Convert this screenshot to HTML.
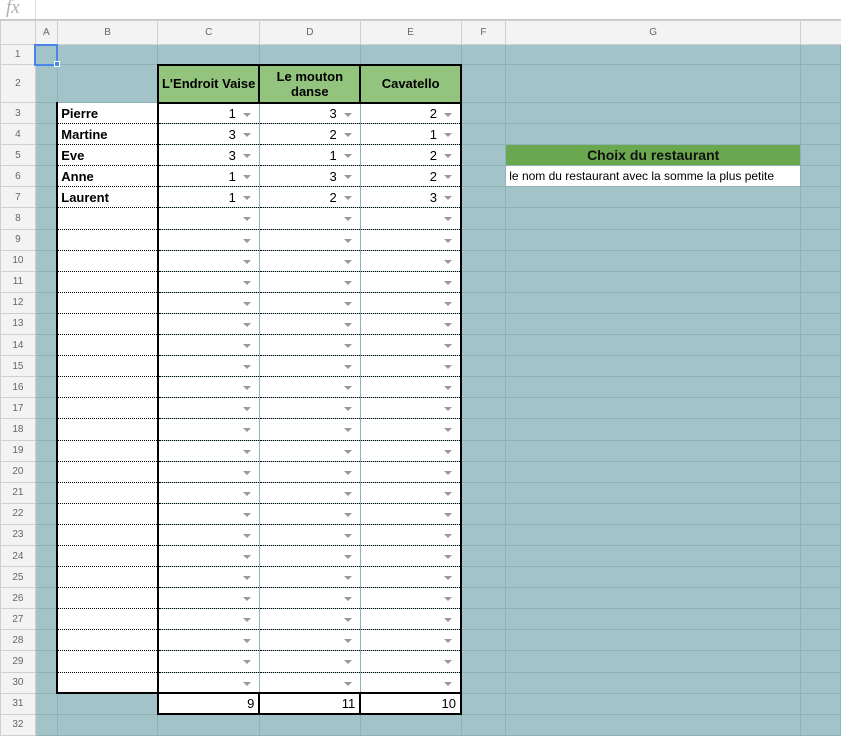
<!DOCTYPE html>
<html><head><meta charset="utf-8"><style>
*{margin:0;padding:0;box-sizing:border-box}
body{width:841px;height:734px;overflow:hidden;background:#a2c4c9;font-family:"Liberation Sans",Arial,sans-serif;position:relative}
#fb{position:absolute;left:0;top:0;width:841px;height:20px;background:#fff;border-bottom:1px solid #c8c8c8}
#fb span{position:absolute;left:6px;top:-3px;font-family:"Liberation Serif",serif;font-style:italic;font-size:19px;color:#b0b0b0}
#fb i{position:absolute;left:35px;top:0;height:19px;border-left:1px solid #ddd}
table{position:absolute;left:0;top:20px;border-collapse:collapse;table-layout:fixed}
th{background:#f3f3f3;color:#666;font-weight:normal;font-size:10px;border:1px solid #cfcfcf}
thead th{height:24px}
tbody th{text-align:center}
td{border:1px solid #8fb2b7;font-size:13px;color:#000;padding:0 3px;white-space:nowrap;overflow:visible}
tr.r{height:21.1px}
td.n{background:#fff;border-left:2px solid #000;border-right:2px solid #000;border-top:1px dotted #000;border-bottom:1px dotted #000;font-weight:bold}
td.c{background:#fff;border-left:1px solid #000;border-top:1px dotted #000;border-bottom:1px dotted #000;text-align:right;padding-right:23px;position:relative}
td.c::after{content:"";position:absolute;right:8px;top:9px;border-left:4px solid transparent;border-right:4px solid transparent;border-top:4px solid #999}
td.e{border-right:2px solid #000}
td.h{background:#93c47d;border:2px solid #000;font-weight:bold;text-align:center;line-height:15px}
tr.last td.n,tr.last td.c{border-bottom:2px solid #000}
td.s{background:#fff;border:2px solid #000;border-left:1px solid #000;text-align:right;padding-right:4px}
td.s.f{border-left:2px solid #000}
td.g{background:#6aa84f;font-weight:bold;font-size:14px;text-align:center;color:#111}
td.w{background:#fff;font-size:12px}
#hd{position:absolute;left:54px;top:61px;width:6px;height:6px;background:#4a86e8;border:1px solid #fff}
</style></head><body>
<div id="fb"><span>fx</span><i></i></div>
<table>
<colgroup><col style="width:35px"><col style="width:22px"><col style="width:101px"><col style="width:101px"><col style="width:101px"><col style="width:101px"><col style="width:45px"><col style="width:295px"><col style="width:40px"></colgroup>
<thead><tr><th></th><th>A</th><th>B</th><th>C</th><th>D</th><th>E</th><th>F</th><th>G</th><th style="border-right:none"></th></tr></thead>
<tbody>
<tr style="height:20px"><th>1</th><td style="border:2px solid #4a86e8"></td><td></td><td></td><td></td><td></td><td></td><td></td><td></td></tr>
<tr style="height:38px"><th>2</th><td></td><td></td><td class="h">L'Endroit Vaise</td><td class="h">Le mouton<br>danse</td><td class="h">Cavatello</td><td></td><td></td><td></td></tr>
<tr class="r"><th>3</th><td></td><td class="n">Pierre</td><td class="c">1</td><td class="c">3</td><td class="c e">2</td><td></td><td></td><td></td></tr>
<tr class="r"><th>4</th><td></td><td class="n">Martine</td><td class="c">3</td><td class="c">2</td><td class="c e">1</td><td></td><td></td><td></td></tr>
<tr class="r"><th>5</th><td></td><td class="n">Eve</td><td class="c">3</td><td class="c">1</td><td class="c e">2</td><td></td><td class="g">Choix du restaurant</td><td></td></tr>
<tr class="r"><th>6</th><td></td><td class="n">Anne</td><td class="c">1</td><td class="c">3</td><td class="c e">2</td><td></td><td class="w">le nom du restaurant avec la somme la plus petite</td><td></td></tr>
<tr class="r"><th>7</th><td></td><td class="n">Laurent</td><td class="c">1</td><td class="c">2</td><td class="c e">3</td><td></td><td></td><td></td></tr>
<tr class="r"><th>8</th><td></td><td class="n"></td><td class="c"></td><td class="c"></td><td class="c e"></td><td></td><td></td><td></td></tr>
<tr class="r"><th>9</th><td></td><td class="n"></td><td class="c"></td><td class="c"></td><td class="c e"></td><td></td><td></td><td></td></tr>
<tr class="r"><th>10</th><td></td><td class="n"></td><td class="c"></td><td class="c"></td><td class="c e"></td><td></td><td></td><td></td></tr>
<tr class="r"><th>11</th><td></td><td class="n"></td><td class="c"></td><td class="c"></td><td class="c e"></td><td></td><td></td><td></td></tr>
<tr class="r"><th>12</th><td></td><td class="n"></td><td class="c"></td><td class="c"></td><td class="c e"></td><td></td><td></td><td></td></tr>
<tr class="r"><th>13</th><td></td><td class="n"></td><td class="c"></td><td class="c"></td><td class="c e"></td><td></td><td></td><td></td></tr>
<tr class="r"><th>14</th><td></td><td class="n"></td><td class="c"></td><td class="c"></td><td class="c e"></td><td></td><td></td><td></td></tr>
<tr class="r"><th>15</th><td></td><td class="n"></td><td class="c"></td><td class="c"></td><td class="c e"></td><td></td><td></td><td></td></tr>
<tr class="r"><th>16</th><td></td><td class="n"></td><td class="c"></td><td class="c"></td><td class="c e"></td><td></td><td></td><td></td></tr>
<tr class="r"><th>17</th><td></td><td class="n"></td><td class="c"></td><td class="c"></td><td class="c e"></td><td></td><td></td><td></td></tr>
<tr class="r"><th>18</th><td></td><td class="n"></td><td class="c"></td><td class="c"></td><td class="c e"></td><td></td><td></td><td></td></tr>
<tr class="r"><th>19</th><td></td><td class="n"></td><td class="c"></td><td class="c"></td><td class="c e"></td><td></td><td></td><td></td></tr>
<tr class="r"><th>20</th><td></td><td class="n"></td><td class="c"></td><td class="c"></td><td class="c e"></td><td></td><td></td><td></td></tr>
<tr class="r"><th>21</th><td></td><td class="n"></td><td class="c"></td><td class="c"></td><td class="c e"></td><td></td><td></td><td></td></tr>
<tr class="r"><th>22</th><td></td><td class="n"></td><td class="c"></td><td class="c"></td><td class="c e"></td><td></td><td></td><td></td></tr>
<tr class="r"><th>23</th><td></td><td class="n"></td><td class="c"></td><td class="c"></td><td class="c e"></td><td></td><td></td><td></td></tr>
<tr class="r"><th>24</th><td></td><td class="n"></td><td class="c"></td><td class="c"></td><td class="c e"></td><td></td><td></td><td></td></tr>
<tr class="r"><th>25</th><td></td><td class="n"></td><td class="c"></td><td class="c"></td><td class="c e"></td><td></td><td></td><td></td></tr>
<tr class="r"><th>26</th><td></td><td class="n"></td><td class="c"></td><td class="c"></td><td class="c e"></td><td></td><td></td><td></td></tr>
<tr class="r"><th>27</th><td></td><td class="n"></td><td class="c"></td><td class="c"></td><td class="c e"></td><td></td><td></td><td></td></tr>
<tr class="r"><th>28</th><td></td><td class="n"></td><td class="c"></td><td class="c"></td><td class="c e"></td><td></td><td></td><td></td></tr>
<tr class="r"><th>29</th><td></td><td class="n"></td><td class="c"></td><td class="c"></td><td class="c e"></td><td></td><td></td><td></td></tr>
<tr class="r last"><th>30</th><td></td><td class="n"></td><td class="c"></td><td class="c"></td><td class="c e"></td><td></td><td></td><td></td></tr>
<tr class="r"><th>31</th><td></td><td></td><td class="s f">9</td><td class="s">11</td><td class="s">10</td><td></td><td></td><td></td></tr>
<tr class="r"><th>32</th><td></td><td></td><td></td><td></td><td></td><td></td><td></td><td></td></tr>
</tbody></table>
<div id="hd"></div>
</body></html>
